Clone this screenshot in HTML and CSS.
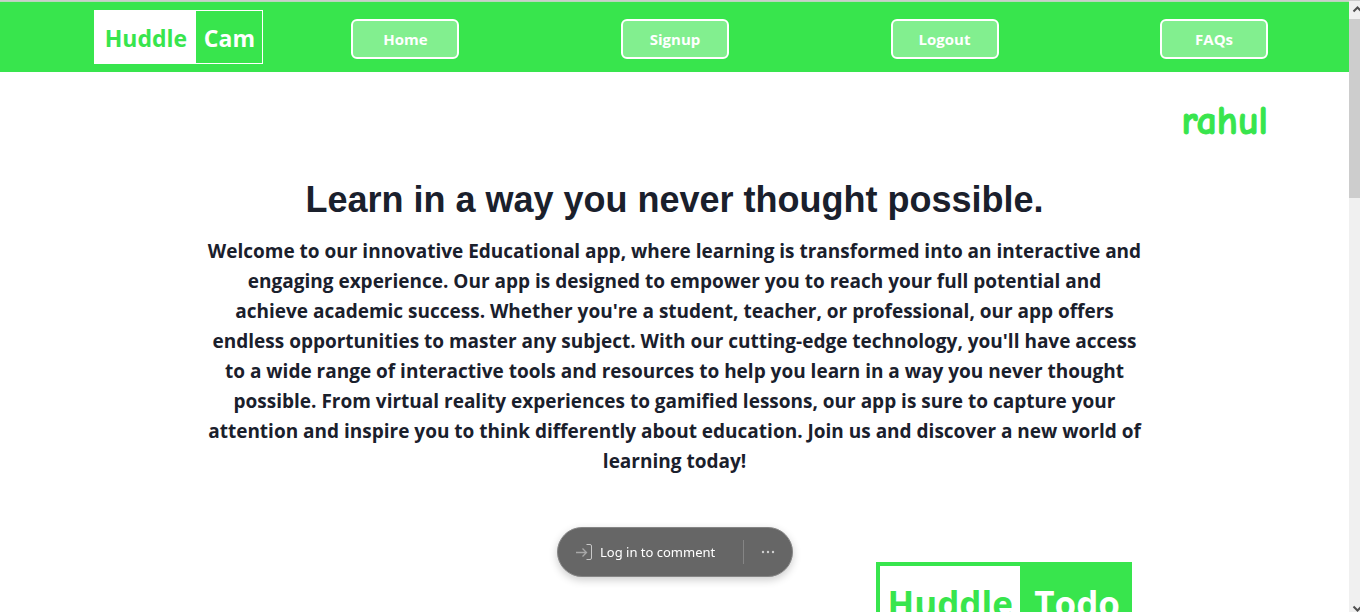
FILE: index.html
```html
<!DOCTYPE html>
<html lang="en">
<head>
<meta charset="utf-8">
<meta name="viewport" content="width=device-width, initial-scale=1">
<title>Huddle Cam</title>
<link rel="stylesheet" href="styles.css">
</head>
<body>
<div class="window">
  <div class="page">
    <header class="navbar">
      <a class="logo" href="#"><span class="logo-main">Huddle</span><span class="logo-sub">Cam</span></a>
      <nav class="nav">
        <button class="nav-button" type="button">Home</button>
        <button class="nav-button" type="button">Signup</button>
        <button class="nav-button" type="button">Logout</button>
        <button class="nav-button" type="button">FAQs</button>
      </nav>
    </header>
    <main>
      <p class="user">rahul</p>
      <section class="intro">
        <h1 class="title">Learn in a way you never thought possible.</h1>
        <p class="text">Welcome to our innovative Educational app, where learning is transformed into an interactive and<br>
        engaging experience. Our app is designed to empower you to reach your full potential and<br>
        achieve academic success. Whether you're a student, teacher, or professional, our app offers<br>
        endless opportunities to master any subject. With our cutting-edge technology, you'll have access<br>
        to a wide range of interactive tools and resources to help you learn in a way you never thought<br>
        possible. From virtual reality experiences to gamified lessons, our app is sure to capture your<br>
        attention and inspire you to think differently about education. Join us and discover a new world of<br>
        learning today!</p>
      </section>
      <section class="products">
        <a class="product" href="#"><span class="product-main">Huddle</span><span class="product-sub">Todo</span></a>
      </section>
    </main>
    <div class="comment-bar">
      <button class="login" type="button">
        <svg class="login-icon" width="18" height="18" viewBox="0 0 18 18" fill="none" stroke="currentColor" aria-hidden="true"><path d="M1 9.5H11.5M7.5 5.5L11.5 9.5L7.5 13.5" stroke="#a8a8a8" stroke-width="1.3"/><path d="M11.5 1.5H15Q16.5 1.5 16.5 3V15Q16.5 16.5 15 16.5H11.5" stroke="#c8c8c8"/></svg>
        <span>Log in to comment</span>
      </button>
      <button class="more" type="button" aria-label="More options">
        <svg width="14" height="4" viewBox="0 0 14 4" fill="#d0d0d0" aria-hidden="true"><circle cx="2" cy="2" r="1.2"/><circle cx="7" cy="2" r="1.2"/><circle cx="12" cy="2" r="1.2"/></svg>
      </button>
    </div>
  </div>
  <div class="scrollbar" aria-hidden="true">
    <svg class="arrow" width="11" height="17" viewBox="0 0 11 17" fill="none" stroke="#505050" stroke-width="2"><path d="M4.500 10.500L8.500 6.500L12.500 10.500"/></svg>
    <div class="track"><div class="thumb"></div></div>
    <svg class="arrow" width="11" height="8" viewBox="0 0 11 8" fill="none" stroke="#505050" stroke-width="2"><path d="M4.500 2.500L8.500 6.500L12.500 2.500"/></svg>
  </div>
</div>
</body>
</html>
```

FILE: styles.css
```css
* {
  box-sizing: border-box;
}

body {
  margin: 0;
  background: #fff;
  color: #1a202c;
  font-family: "Segoe UI", "Open Sans", sans-serif;
}

h1,
p {
  margin: 0;
}

button {
  font-family: inherit;
  cursor: pointer;
}

a {
  text-decoration: none;
}

.window {
  display: flex;
  height: 100vh;
  overflow: hidden;
  border-top: 1px solid #ccc;
}

.page {
  flex: 1;
  min-width: 0;
  overflow: hidden;
}

.navbar {
  display: flex;
  align-items: center;
  height: 71px;
  padding: 0 6% 0 7%;
  border-top: 1px solid #b8d8bc;
  background: #38e54d;
}

.logo {
  display: flex;
  height: 54px;
  border: 1px solid #fff;
  font-size: 23px;
  font-weight: 700;
  line-height: 54px;
}

.logo-main {
  width: 101px;
  background: #fff;
  color: #38e54d;
  text-align: center;
}

.logo-sub {
  width: 66px;
  color: #fff;
  text-align: center;
}

.nav {
  display: flex;
  flex: 1;
  justify-content: space-between;
  margin-left: 88px;
}

.nav-button {
  width: 108px;
  height: 40px;
  margin-top: 4px;
  padding: 0;
  border: 2px solid #fff;
  border-radius: 6px;
  background: #82ef8f;
  color: #fff;
  font-size: 15px;
  font-weight: 700;
}

.user {
  padding: 22px 6% 0 0;
  color: #38e54d;
  font-family: "Comic Sans MS", "Comic Neue", "Open Sans", sans-serif;
  font-size: 40px;
  font-weight: 700;
  line-height: 55px;
  text-align: right;
  -webkit-text-stroke: 1px #38e54d;
}

.intro {
  padding-top: 24px;
  text-align: center;
}

.title {
  font-family: "Liberation Sans", Arial, sans-serif;
  font-size: 36px;
  font-weight: 700;
  line-height: 54px;
}

.text {
  padding-top: 9px;
  font-size: 19px;
  font-weight: 700;
  line-height: 30px;
  white-space: nowrap;
}

.products {
  display: flex;
  justify-content: flex-end;
  padding: 86px 16% 0 0;
}

.product {
  display: flex;
  margin-right: 1px;
  border: 4px solid #38e54d;
  background: #38e54d;
  font-size: 35px;
  font-weight: 700;
  line-height: 76px;
  text-align: center;
}

.product-main {
  width: 140px;
  background: #fff;
  color: #38e54d;
}

.product-sub {
  width: 108px;
  padding-left: 6px;
  color: #fff;
}

.comment-bar {
  position: fixed;
  bottom: 35px;
  left: calc(50% - 123px);
  display: flex;
  align-items: center;
  height: 50px;
  border: 1px solid #858585;
  border-radius: 25px;
  background: #666;
  box-shadow: 0 3px 9px rgba(0, 0, 0, 0.2);
}

.login,
.more {
  display: flex;
  align-items: center;
  height: 24px;
  padding: 0;
  border: 0;
  background: none;
  color: #fff;
  font-family: "Noto Sans", sans-serif;
  font-size: 13px;
}

.login {
  gap: 7px;
  width: 186px;
  padding-left: 17px;
  border-right: 1px solid #858585;
}

.more {
  justify-content: center;
  width: 48px;
}

.scrollbar {
  display: flex;
  flex-direction: column;
  width: 11px;
  background: #f0f0f0;
}

.arrow {
  display: block;
}

.track {
  flex: 1;
  padding-top: 1px;
}

.thumb {
  height: 179px;
  background: #cdcdcd;
}
```
